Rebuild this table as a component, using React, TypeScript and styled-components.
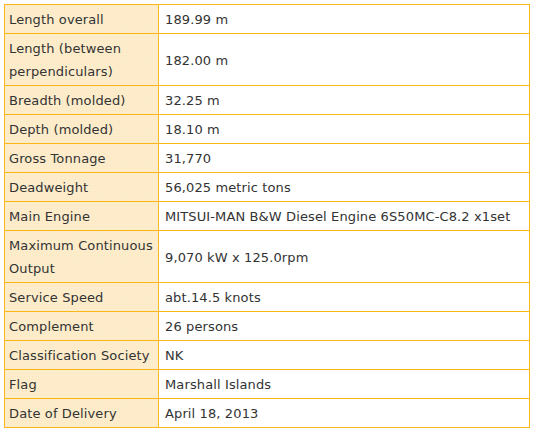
import React from 'react';
import styled, { createGlobalStyle } from 'styled-components';

const GlobalStyle = createGlobalStyle`
  body {
    margin: 0;
    background: #fff;
    font-family: 'DejaVu Sans', Verdana, sans-serif;
  }
`;

const SpecTable = styled.table`
  margin: 4px;
  width: 526px;
  border-collapse: collapse;
  font-size: 13px;
  line-height: 23px;
  letter-spacing: 0.12px;
  color: #333;
`;

const Label = styled.th`
  width: 145px;
  padding: 3px 4px 2px;
  border: 1px solid #f9b81a;
  background-color: #fdebc8;
  background-image: radial-gradient(rgba(255, 255, 255, 0.35) 0.6px, transparent 0.7px);
  background-size: 3px 3px;
  font-weight: normal;
  text-align: left;
  vertical-align: middle;
`;

const Value = styled.td`
  padding: 3px 6px 2px;
  border: 1px solid #f9b81a;
  background: #fff;
  vertical-align: middle;
`;

const specs: [string, string][] = [
  ['Length overall', '189.99 m'],
  ['Length (between perpendiculars)', '182.00 m'],
  ['Breadth (molded)', '32.25 m'],
  ['Depth (molded)', '18.10 m'],
  ['Gross Tonnage', '31,770'],
  ['Deadweight', '56,025 metric tons'],
  ['Main Engine', 'MITSUI-MAN B&W Diesel Engine 6S50MC-C8.2 x1set'],
  ['Maximum Continuous Output', '9,070 kW x 125.0rpm'],
  ['Service Speed', 'abt.14.5 knots'],
  ['Complement', '26 persons'],
  ['Classification Society', 'NK'],
  ['Flag', 'Marshall Islands'],
  ['Date of Delivery', 'April 18, 2013'],
];

const App: React.FC = () => (
  <>
    <GlobalStyle />
    <SpecTable>
      <tbody>
        {specs.map(([label, value]) => (
          <tr key={label}>
            <Label scope="row">{label}</Label>
            <Value>{value}</Value>
          </tr>
        ))}
      </tbody>
    </SpecTable>
  </>
);

export default App;
